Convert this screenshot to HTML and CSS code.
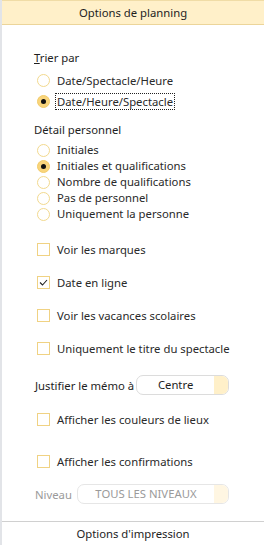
FILE: index.html
```html
<!DOCTYPE html>
<html lang="fr">
<head>
    <meta charset="UTF-8">
    <title>Options de planning</title>
    <link rel="stylesheet" href="styles.css">
</head>
<body>
    <div class="panel">
        <div class="header">Options de planning</div>

        <div class="content">
            <div class="label-row trier"><span class="ul">T</span>rier par</div>
            <div class="radio-group big">
                <div class="opt"><span class="radio"></span>Date/Spectacle/Heure</div>
                <div class="opt"><span class="radio on"></span><span class="focus">Date/Heure/Spectacle</span></div>
            </div>

            <div class="label-row detail">Détail personnel</div>
            <div class="radio-group small">
                <div class="opt"><span class="radio"></span>Initiales</div>
                <div class="opt"><span class="radio on"></span>Initiales et qualifications</div>
                <div class="opt"><span class="radio"></span>Nombre de qualifications</div>
                <div class="opt"><span class="radio"></span>Pas de personnel</div>
                <div class="opt"><span class="radio"></span>Uniquement la personne</div>
            </div>

            <div class="check-group">
                <div class="opt"><span class="box"></span>Voir les marques</div>
                <div class="opt"><span class="box"><svg width="9" height="9" viewBox="0 0 9 9"><polyline points="1,4.5 3.5,7 8,2" fill="none" stroke="#222" stroke-width="1.1"/></svg></span>Date en ligne</div>
                <div class="opt"><span class="box"></span>Voir les vacances scolaires</div>
                <div class="opt"><span class="box"></span>Uniquement le titre du spectacle</div>
            </div>

            <div class="select-row justifier">
                <span class="select-label">Justifier le mémo à</span>
                <div class="select memo"><span class="select-value">Centre</span><span class="select-btn"></span></div>
            </div>

            <div class="opt single couleurs"><span class="box"></span>Afficher les couleurs de lieux</div>
            <div class="opt single confirm"><span class="box"></span>Afficher les confirmations</div>

            <div class="select-row niveau disabled">
                <span class="select-label">Niveau</span>
                <div class="select level"><span class="select-value">TOUS LES NIVEAUX</span><span class="select-btn"></span></div>
            </div>
        </div>

        <div class="footer">Options d'impression</div>
    </div>
</body>
</html>
```

FILE: styles.css
```css
body {
    margin: 0;
    font-family: 'Noto Sans', sans-serif;
    font-size: 11.3px;
    color: #1e1e1e;
    background-color: white;
}
.panel {
    width: 264px;
    height: 545px;
    box-sizing: border-box;
    border-left: 2px solid #e2e4e8;
    display: flex;
    flex-direction: column;
    overflow: hidden;
}
.header {
    height: 23px;
    line-height: 23px;
    text-align: center;
    background-color: #fff0c9;
    border-top: 1px solid #f0dca6;
    border-bottom: 1px solid #ecd59a;
}
.content {
    flex: 1;
    padding-left: 32px;
}
.label-row {
    height: 16px;
    line-height: 16px;
}
.trier {
    margin-top: 25px;
}
.ul {
    text-decoration: underline;
}
.opt {
    display: flex;
    align-items: center;
    color: #2a2a2a;
    padding-left: 3px;
    line-height: 16px;
}
.big {
    margin-top: 4px;
}
.big .opt {
    height: 21px;
}
.detail {
    margin-top: 10px;
}
.small {
    margin-top: 4px;
}
.small .opt {
    height: 16px;
    align-items: flex-start;
}
.small .radio {
    margin-top: 2px;
}
.radio {
    width: 11px;
    height: 11px;
    border: 1px solid #f2d98e;
    border-radius: 50%;
    margin-right: 7px;
    display: flex;
    align-items: center;
    justify-content: center;
    flex-shrink: 0;
}
.radio.on {
    background-color: #f9d57c;
    border-color: #f3cc6a;
}
.radio.on::after {
    content: '';
    width: 5px;
    height: 5px;
    border-radius: 50%;
    background-color: #111;
}
.focus {
    border: 1px dotted #222;
    padding: 0 1px;
    margin-left: -2px;
    line-height: 15px;
}
.check-group {
    margin-top: 11px;
}
.check-group .opt {
    height: 33px;
}
.box {
    width: 11px;
    height: 11px;
    border: 1px solid #f0d283;
    margin-right: 7px;
    display: flex;
    align-items: center;
    justify-content: center;
    flex-shrink: 0;
}
.select-row {
    display: flex;
    align-items: center;
    height: 20px;
    padding-left: 1px;
}
.justifier {
    margin-top: 10px;
}
.select-label {
    margin-right: 2px;
}
.select {
    height: 20px;
    box-sizing: border-box;
    border: 1px solid #dcdcdc;
    border-radius: 7px;
    display: flex;
    overflow: hidden;
    background-color: white;
}
.select-value {
    flex: 1;
    text-align: center;
    line-height: 18px;
}
.select-btn {
    width: 14px;
    background-color: #fff0c9;
}
.memo {
    width: 93px;
}
.opt.single {
    height: 13px;
}
.couleurs {
    margin-top: 18px;
}
.confirm {
    margin-top: 29px;
}
.niveau {
    margin-top: 16px;
}
.disabled {
    color: #9a9a9a;
}
.level {
    width: 152px;
    margin-left: 3px;
    border-color: #e6e6e6;
}
.level .select-btn {
    background-color: #fff6e2;
}
.footer {
    height: 23px;
    line-height: 23px;
    text-align: center;
    border-top: 1px solid #d0d0d0;
}
```
